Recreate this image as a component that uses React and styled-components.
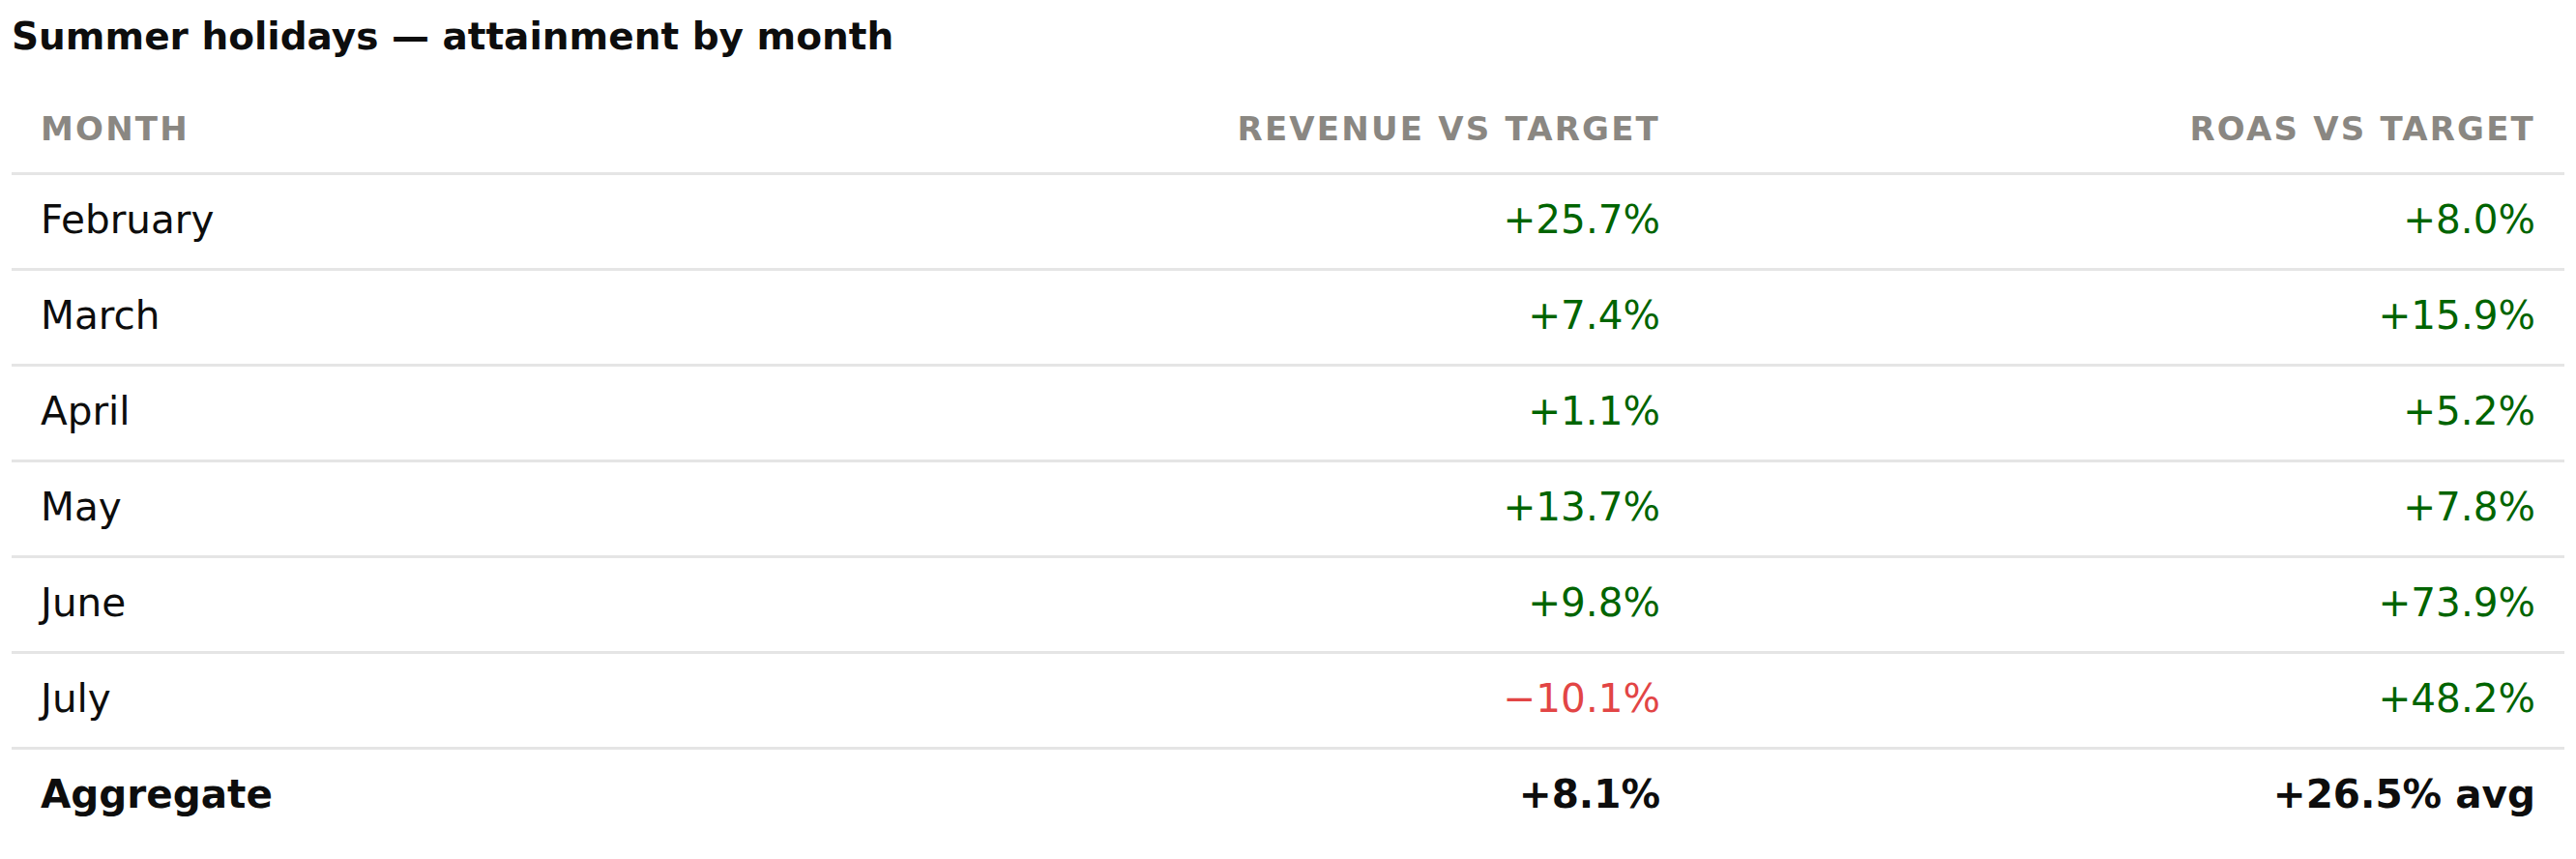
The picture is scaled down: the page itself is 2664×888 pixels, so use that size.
import React from 'react';
import styled, { createGlobalStyle } from 'styled-components';

const GlobalStyle = createGlobalStyle`
  html, body {
    margin: 0;
    padding: 0;
    background: #ffffff;
  }
  body {
    font-family: "DejaVu Sans", "Liberation Sans", sans-serif;
    color: #111111;
  }
`;

const Page = styled.div`
  padding: 12px 12px 0;
`;

const Title = styled.h2`
  margin: 0 0 25px;
  font-size: 39px;
  line-height: 52px;
  font-weight: 700;
  color: #0d0d0d;
`;

const Table = styled.div`
  display: grid;
  grid-template-columns: 835px 900px 905px;
`;

const HeadCell = styled.div`
  padding: 24px 30px 25px;
  font-size: 34px;
  line-height: 40px;
  font-weight: 700;
  letter-spacing: 2.2px;
  text-transform: uppercase;
  color: #8a8782;
  text-align: ${(p) => (p.$right ? 'right' : 'left')};
  border-bottom: 3px solid #e5e5e5;
`;

const Cell = styled.div`
  padding: 23px 30px 27px;
  font-size: 40.5px;
  line-height: 46px;
  font-weight: ${(p) => (p.$bold ? 700 : 400)};
  text-align: ${(p) => (p.$right ? 'right' : 'left')};
  color: ${(p) =>
    p.$tone === 'up' ? '#006400' : p.$tone === 'down' ? '#e24545' : '#0d0d0d'};
  border-bottom: ${(p) => (p.$last ? 'none' : '3px solid #e5e5e5')};
`;

const rows = [
  { month: 'February', revenue: 25.7, roas: 8.0 },
  { month: 'March', revenue: 7.4, roas: 15.9 },
  { month: 'April', revenue: 1.1, roas: 5.2 },
  { month: 'May', revenue: 13.7, roas: 7.8 },
  { month: 'June', revenue: 9.8, roas: 73.9 },
  { month: 'July', revenue: -10.1, roas: 48.2 },
];

const fmt = (v) => `${v < 0 ? '\u2212' : '+'}${Math.abs(v).toFixed(1)}%`;
const tone = (v) => (v < 0 ? 'down' : 'up');

export default function App() {
  return (
    <Page>
      <GlobalStyle />
      <Title>Summer holidays — attainment by month</Title>
      <Table>
        <HeadCell>Month</HeadCell>
        <HeadCell $right>Revenue vs target</HeadCell>
        <HeadCell $right>ROAS vs target</HeadCell>
        {rows.map((r) => (
          <React.Fragment key={r.month}>
            <Cell>{r.month}</Cell>
            <Cell $right $tone={tone(r.revenue)}>{fmt(r.revenue)}</Cell>
            <Cell $right $tone={tone(r.roas)}>{fmt(r.roas)}</Cell>
          </React.Fragment>
        ))}
        <Cell $bold $last>Aggregate</Cell>
        <Cell $bold $last $right>+8.1%</Cell>
        <Cell $bold $last $right>+26.5% avg</Cell>
      </Table>
    </Page>
  );
}
